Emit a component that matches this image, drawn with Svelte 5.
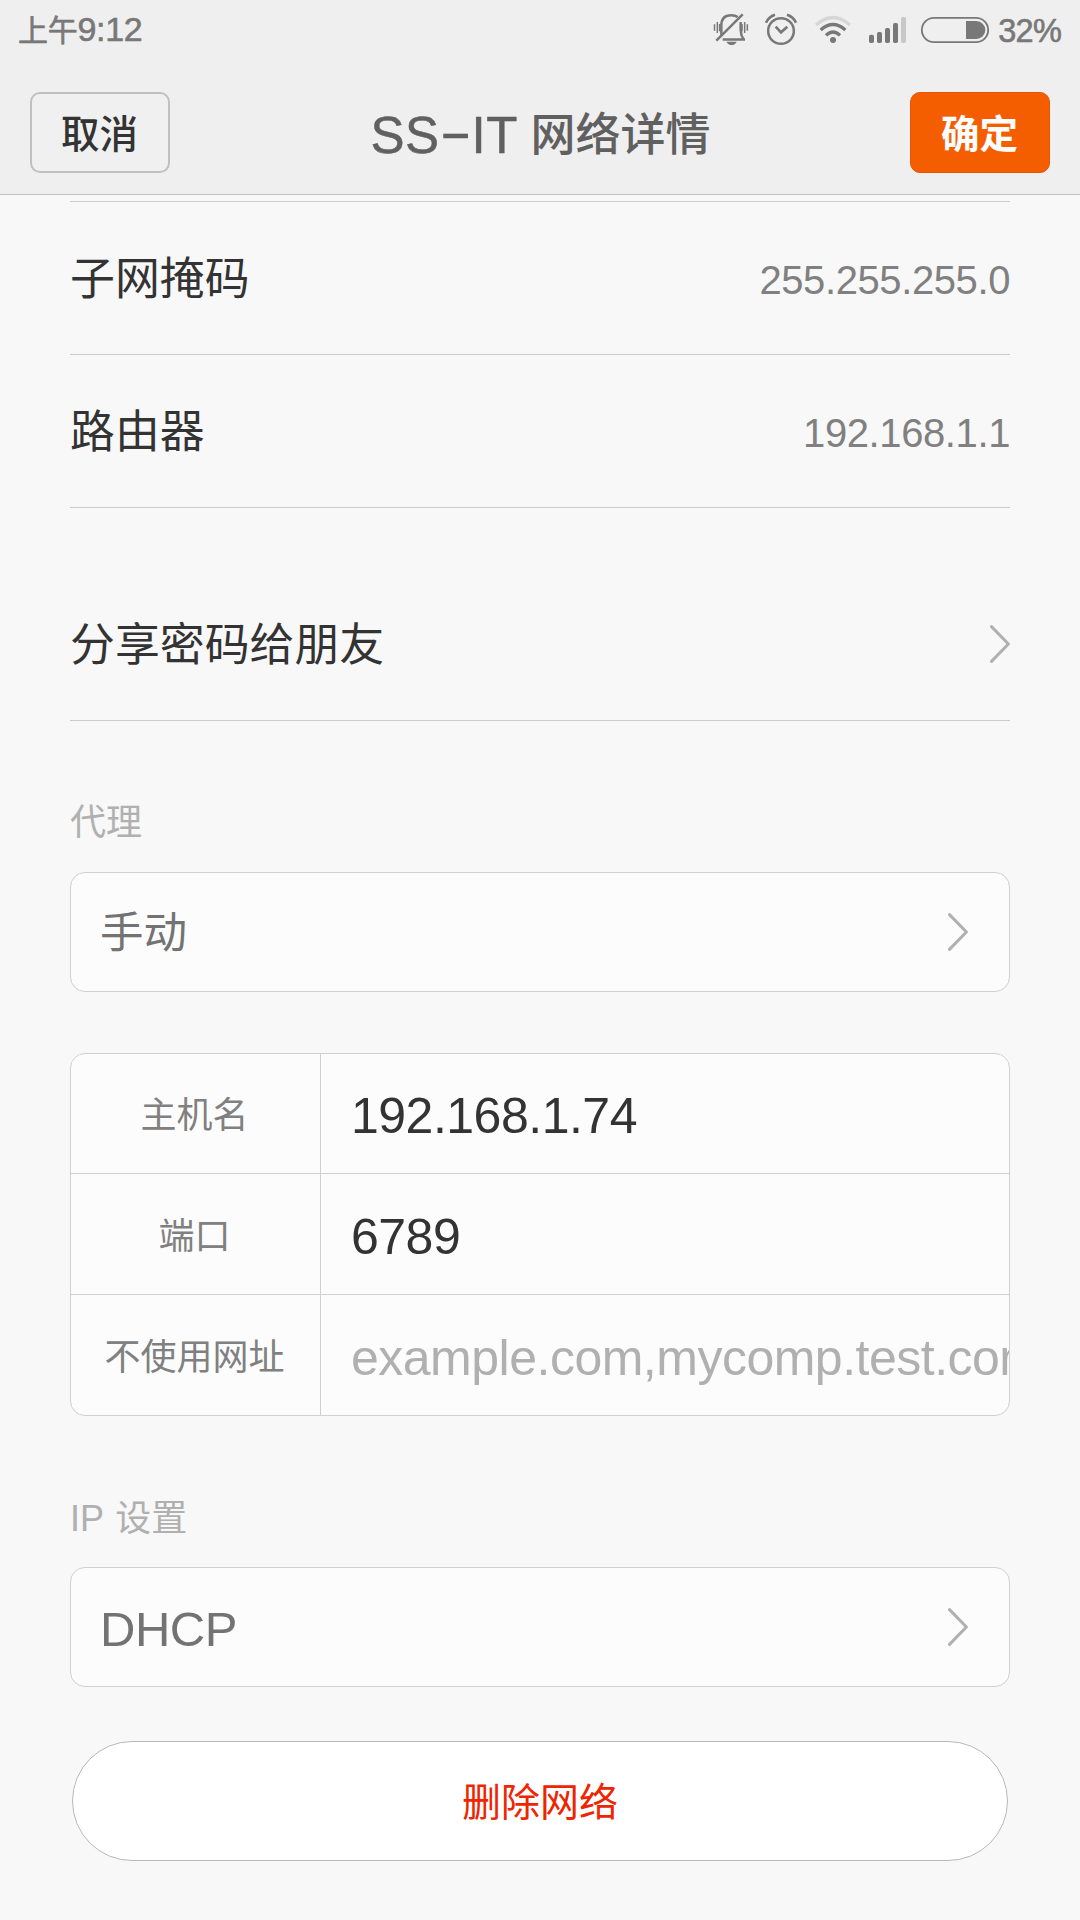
<script>
  const info = [
    { label: '子网掩码', value: '255.255.255.0' },
    { label: '路由器', value: '192.168.1.1' }
  ];
  const proxy = [
    { label: '主机名', value: '192.168.1.74' },
    { label: '端口', value: '6789' },
    { label: '不使用网址', value: 'example.com,mycomp.test.com', hint: true }
  ];
</script>

{#snippet chevron()}
  <svg class="chevron" viewBox="0 0 20 38" width="20" height="38">
    <path d="M1.5 1.6 L18.4 19 L1.5 36.4" />
  </svg>
{/snippet}

<div class="screen">
  <header>
    <div class="status">
      <div class="time"><span class="cjk">上午</span>9:12</div>
      <div class="icons">
        <svg viewBox="39 0 108 180" width="36" height="60">
          <g fill="none" stroke="#787878" stroke-width="7.500">
            <path d="M64 104 V76 C64 54 76 45.500 94 45.500 C103 45.500 108 47 113 51" />
            <path d="M122 66 V90 C122 105 127 113 131 119 M68 118.500 H135" />
            <path d="M49 122 L128 43" />
            <path d="M43.500 73 V92 M52 66 V99 M59 72 V94" stroke-width="4.500" />
            <path d="M126 72 V94 M134 66 V99 M142 73 V92" stroke-width="4.500" />
          </g>
          <path d="M79 125 H110 Q105 135 95 135 Q85 135 79 125Z" fill="#787878" />
        </svg>
        <svg viewBox="192 0 102 180" width="34" height="60">
          <g fill="none" stroke="#787878" stroke-width="7.500">
            <circle cx="243" cy="93" r="38.500" />
            <path d="M227 80 L243 97 L262 80" stroke-width="8" />
            <path d="M198 68 Q206 50 225 44 M261 44 Q280 50 288 68" stroke-width="8" />
          </g>
        </svg>
        <svg viewBox="339 0 120 180" width="40" height="60">
          <g fill="none" stroke="#787878" stroke-width="10">
            <path d="M348 75 Q399 30 450 75" stroke="#d6d6d6" />
            <path d="M362 90 Q399 57 436 90" />
            <path d="M378 106 Q399 86 420 106" />
          </g>
          <circle cx="399" cy="120" r="9" fill="#787878" />
        </svg>
        <svg viewBox="504 0 111 180" width="37" height="60">
          <g fill="#787878">
            <rect x="507" y="104" width="15" height="25" rx="5" />
            <rect x="531" y="96" width="15" height="33" rx="5" />
            <rect x="555" y="84" width="15" height="45" rx="5" />
            <rect x="579" y="69" width="15" height="60" rx="5" />
            <rect x="603" y="51" width="15" height="78" rx="5" fill="#c8c8c8" />
          </g>
        </svg>
        <svg viewBox="660 0 210 180" width="70" height="60">
          <rect x="665.500" y="53.500" width="199" height="73" rx="36.500" fill="none" stroke="#787878" stroke-width="5.500" />
          <path d="M798 63 H829 A27 27 0 0 1 829 117 H798Z" fill="#787878" />
        </svg>
        <span class="percent">32%</span>
      </div>
    </div>
    <div class="titlebar">
      <button class="cancel">取消</button>
      <h1><span class="latin">SS<span class="dash">-</span>IT</span><span class="name">网络详情</span></h1>
      <button class="confirm">确定</button>
    </div>
  </header>

  <main>
    <section class="list">
      {#each info as row}
        <div class="row"><span class="label">{row.label}</span><span class="value">{row.value}</span></div>
      {/each}
      <div class="row share"><span class="label">分享密码给朋友</span>{@render chevron()}</div>
    </section>

    <h2>代理</h2>
    <div class="select"><span class="choice">手动</span>{@render chevron()}</div>

    <div class="form">
      {#each proxy as field}
        <div class="field">
          <div class="name-cell">{field.label}</div>
          <div class="input" class:hint={field.hint}>{field.value}</div>
        </div>
      {/each}
    </div>

    <h2 class="ip">IP 设置</h2>
    <div class="select dhcp"><span>DHCP</span>{@render chevron()}</div>

    <button class="delete">删除网络</button>
  </main>
</div>

<style>
  :global(body) { margin: 0; background: #f8f8f8; }
  * { box-sizing: border-box; }
  .screen {
    width: 1080px;
    height: 1920px;
    overflow: hidden;
    background: #f8f8f8;
    color: #333;
    font-family: "Liberation Sans", "Noto Sans CJK SC", sans-serif;
  }
  header { height: 195px; background: #efefef; border-bottom: 1px solid #c0c0c0; }
  .status {
    height: 60px;
    display: flex;
    justify-content: space-between;
    padding: 0 18px;
    color: #787878;
    -webkit-text-stroke: 0.6px #787878;
  }
  .time { font-size: 34px; line-height: 59px; white-space: nowrap; letter-spacing: -0.300px; }
  .time .cjk { font-size: 30px; }
  .icons { display: flex; gap: 15px; }
  .icons svg { display: block; overflow: visible; }
  .percent { font-size: 32.500px; line-height: 62px; margin-left: -7px; margin-right: 1px; letter-spacing: -0.800px; }
  .titlebar {
    height: 134px;
    padding: 32px 30px 0;
    display: flex;
    justify-content: space-between;
    align-items: flex-start;
  }
  button { font-family: inherit; padding: 0; display: block; }
  .cancel, .confirm {
    width: 140px;
    height: 81px;
    border-radius: 10px;
    font-size: 38.500px;
    line-height: 77px;
    padding-top: 4px;
    padding-right: 1px;
  }
  .cancel { background: #f0f0f0; border: 2px solid #c0c0c0; color: #333; font-weight: 500; line-height: 73px; }
  .confirm { background: #f45e00; border: 1px solid #e55600; color: #fff; font-weight: 700; line-height: 75px; }
  h1 {
    margin: 0;
    font-size: 45px;
    font-weight: 500;
    line-height: 88px;
    color: #606060;
    display: flex;
    white-space: nowrap;
  }
  .latin { font-size: 51px; width: 160px; margin-left: 1px; line-height: 87px; letter-spacing: 0.500px; -webkit-text-stroke: 0.500px #606060; }
  .dash { display: inline-block; width: 32px; text-align: center; transform: translateY(-3px) scaleX(1.900); }

  main { padding: 6px 70px 0; }
  .list { border-top: 1px solid #ccc; }
  .row {
    height: 153px;
    display: flex;
    align-items: center;
    justify-content: space-between;
    border-bottom: 1px solid #ccc;
    font-size: 44.900px;
  }
  .label { padding-bottom: 5px; }
  .value { font-size: 40px; color: #808080; letter-spacing: -0.400px; padding-top: 4px; }
  .chevron { display: block; }
  .share { margin-top: 60px; }
  .chevron path { fill: none; stroke: #b0b0b0; stroke-width: 3; stroke-linecap: round; stroke-linejoin: round; }
  h2 {
    margin: 0;
    height: 151px;
    padding-top: 52px;
    font-size: 36px;
    line-height: 100px;
    font-weight: 400;
    color: #b0b0b0;
  }
  .ip { word-spacing: 2px; padding-top: 53px; }
  .select {
    height: 120px;
    border: 1px solid #d0d0d0;
    border-radius: 15px;
    background: #fcfcfc;
    display: flex;
    align-items: center;
    justify-content: space-between;
    padding: 0 41px 0 29px;
    font-size: 43.500px;
    color: #737373;
  }
  .choice { padding-bottom: 5px; }
  .dhcp { font-size: 49px; letter-spacing: -0.500px; }
  .dhcp span { padding-top: 3px; }
  .form {
    margin-top: 61px;
    border: 1px solid #d0d0d0;
    border-radius: 15px;
    background: #fcfcfc;
    overflow: hidden;
  }
  .field { display: flex; height: 121px; border-bottom: 1px solid #d0d0d0; line-height: 126px; }
  .field:first-child { height: 120px; line-height: 124px; }
  .field:last-child { height: 120px; border-bottom: 0; }
  .name-cell {
    width: 250px;
    flex: none;
    border-right: 1px solid #d0d0d0;
    padding-right: 2px;
    text-align: center;
    font-size: 36px;
    color: #808080;
  }
  .input { flex: 1; min-width: 0; padding-left: 30px; font-size: 50px; letter-spacing: -0.500px; white-space: nowrap; overflow: hidden; }
  .input.hint { color: #b0b0b0; }
  .delete {
    width: 936px;
    height: 120px;
    margin: 54px 2px 0;
    padding-top: 4px;
    border: 1px solid #b8b8b8;
    border-radius: 60px;
    background: #fff;
    color: #ee2500;
    font-size: 39px;
    line-height: 114px;
  }
</style>
